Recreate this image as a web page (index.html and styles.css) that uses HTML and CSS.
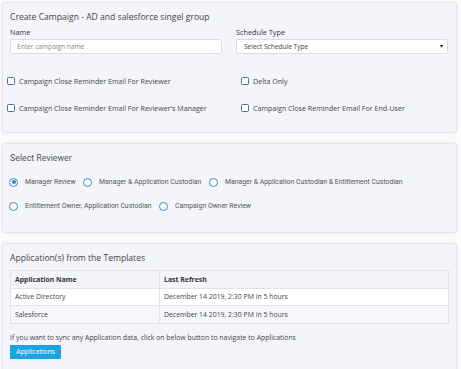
FILE: index.html
```html
<!DOCTYPE html>
<html>
<head>
<meta charset="utf-8">
<link rel="stylesheet" href="styles.css">
</head>
<body>
<div class="page">
  <section class="card card-create">
    <h2 class="title">Create Campaign - AD and salesforce singel group</h2>
    <div class="form-grid">
      <div class="field">
        <label class="label">Name</label>
        <div class="input placeholder">Enter campaign name</div>
      </div>
      <div class="field">
        <label class="label">Schedule Type</label>
        <div class="input select"><span>Select Schedule Type</span><span class="caret">&#9662;</span></div>
      </div>
    </div>
    <div class="check-grid">
      <div class="check"><span class="box"></span>Campaign Close Reminder Email For Reviewer</div>
      <div class="check right"><span class="box"></span>Delta Only</div>
      <div class="check"><span class="box"></span>Campaign Close Reminder Email For Reviewer's Manager</div>
      <div class="check right"><span class="box"></span>Campaign Close Reminder Email For End-User</div>
    </div>
  </section>

  <section class="card card-reviewer">
    <h2 class="title roboto">Select Reviewer</h2>
    <div class="radio-row">
      <div class="radio checked"><span class="ring"></span>Manager Review</div>
      <div class="radio"><span class="ring"></span>Manager &amp; Application Custodian</div>
      <div class="radio"><span class="ring"></span>Manager &amp; Application Custodian &amp; Entitlement Custodian</div>
    </div>
    <div class="radio-row">
      <div class="radio"><span class="ring"></span>Entitlement Owner, Application Custodian</div>
      <div class="radio"><span class="ring"></span>Campaign Owner Review</div>
    </div>
  </section>

  <section class="card card-apps">
    <h2 class="title">Application(s) from the Templates</h2>
    <table class="apps">
      <thead>
        <tr><th class="c1">Application Name</th><th>Last Refresh</th></tr>
      </thead>
      <tbody>
        <tr class="odd"><td class="c1">Active Directory</td><td>December 14 2019, 2:30 PM in 5 hours</td></tr>
        <tr class="even"><td class="c1">Salesforce</td><td>December 14 2019, 2:30 PM in 5 hours</td></tr>
      </tbody>
    </table>
    <p class="note">If you want to sync any Application data, click on below button to navigate to Applications</p>
    <button class="btn">Applications</button>
  </section>
</div>
</body>
</html>
```

FILE: styles.css
```css
* { box-sizing: border-box; }
html, body { margin: 0; padding: 0; }
body {
  background: #fbfbfc;
  font-family: "Open Sans", "Liberation Sans", sans-serif;
  color: #444;
  width: 461px;
  height: 369px;
  overflow: hidden;
}
.page {
  padding: 2px 4px 0 2px;
  display: flex;
  flex-direction: column;
  gap: 10px;
}
.card {
  background: #f4f5fa;
  border: 1px solid #e6e7ec;
  border-radius: 3px;
  box-shadow: 0 0 3px rgba(0,0,0,0.08);
  padding: 0 8px 0 7px;
}
.title {
  margin: 0;
  font-weight: 400;
  font-size: 8.6px;
  line-height: 12px;
  color: #444;
}
.roboto { font-family: Roboto, "Liberation Sans", sans-serif; }

/* card 1 */
.card-create { height: 131px; padding-top: 8px; }
.form-grid {
  display: grid;
  grid-template-columns: 212px 212px;
  column-gap: 14px;
  margin-top: 4px;
}
.label {
  display: block;
  font-size: 7.3px;
  line-height: 10px;
  color: #333;
  font-weight: 400;
  margin-bottom: 2px;
}
.input {
  height: 15px;
  background: #fff;
  border: 1px solid #dcdde2;
  border-radius: 2px;
  font-size: 6.6px;
  line-height: 13px;
  padding: 0 6px;
  color: #444;
}
.placeholder { color: #8a8a8a; }
.select {
  display: flex;
  justify-content: space-between;
  padding: 0 4px 0 7px;
}
.caret { font-size: 6px; color: #222; }
.check-grid {
  display: grid;
  grid-template-columns: 234px 1fr;
  row-gap: 15px;
  margin-top: 21px;
  margin-left: -3px;
}
.check {
  display: flex;
  align-items: center;
  gap: 4px;
  font-size: 7.1px;
  line-height: 12px;
  color: #444;
}
.box {
  width: 8px;
  height: 8px;
  border: 1px solid #4c6f98;
  border-radius: 1.5px;
  background: #fff;
  flex: none;
}

/* card 2 */
.card-reviewer { height: 90px; padding-top: 8px; }
.card-reviewer .title { font-size: 8.8px; line-height: 12px; color: #555; }
.radio-row {
  display: flex;
  gap: 7.5px;
  margin-top: 12px;
  margin-left: -1px;
}
.radio-row + .radio-row { margin-top: 12px; }
.radio {
  display: flex;
  align-items: center;
  gap: 7px;
  font-family: Roboto, "Liberation Sans", sans-serif;
  font-size: 6.9px;
  line-height: 12px;
  color: #555;
}
.ring {
  width: 9px;
  height: 9px;
  border: 1px solid #3b87d2;
  border-radius: 50%;
  background: #fff;
  flex: none;
  position: relative;
}
.radio.checked .ring::after {
  content: "";
  position: absolute;
  left: 1.5px;
  top: 1.5px;
  width: 4px;
  height: 4px;
  border-radius: 50%;
  background: #2e7bcf;
}

/* card 3 */
.card-apps { height: 140px; padding-top: 8px; }
.apps {
  width: 439px;
  margin-top: 6px;
  border-collapse: collapse;
  font-size: 6.9px;
  color: #444;
}
.apps th, .apps td {
  border: 1px solid #e2e3e8;
  text-align: left;
  height: 17.5px;
  padding: 0 4px;
}
.apps th { font-weight: 700; background: #f4f5fa; color: #333; }
.apps .c1 { width: 149px; }
.apps .odd td { background: #fff; }
.apps .even td { background: #f6f7fa; }
.note {
  margin: 9px 0 0;
  font-size: 6.9px;
  line-height: 10px;
  color: #444;
}
.btn {
  display: block;
  margin-top: 2px;
  width: 51px;
  height: 14px;
  padding: 0;
  border: none;
  border-radius: 1px;
  background: #1aa6e6;
  color: #fff;
  font-family: "Open Sans", "Liberation Sans", sans-serif;
  font-size: 6.8px;
}
```
